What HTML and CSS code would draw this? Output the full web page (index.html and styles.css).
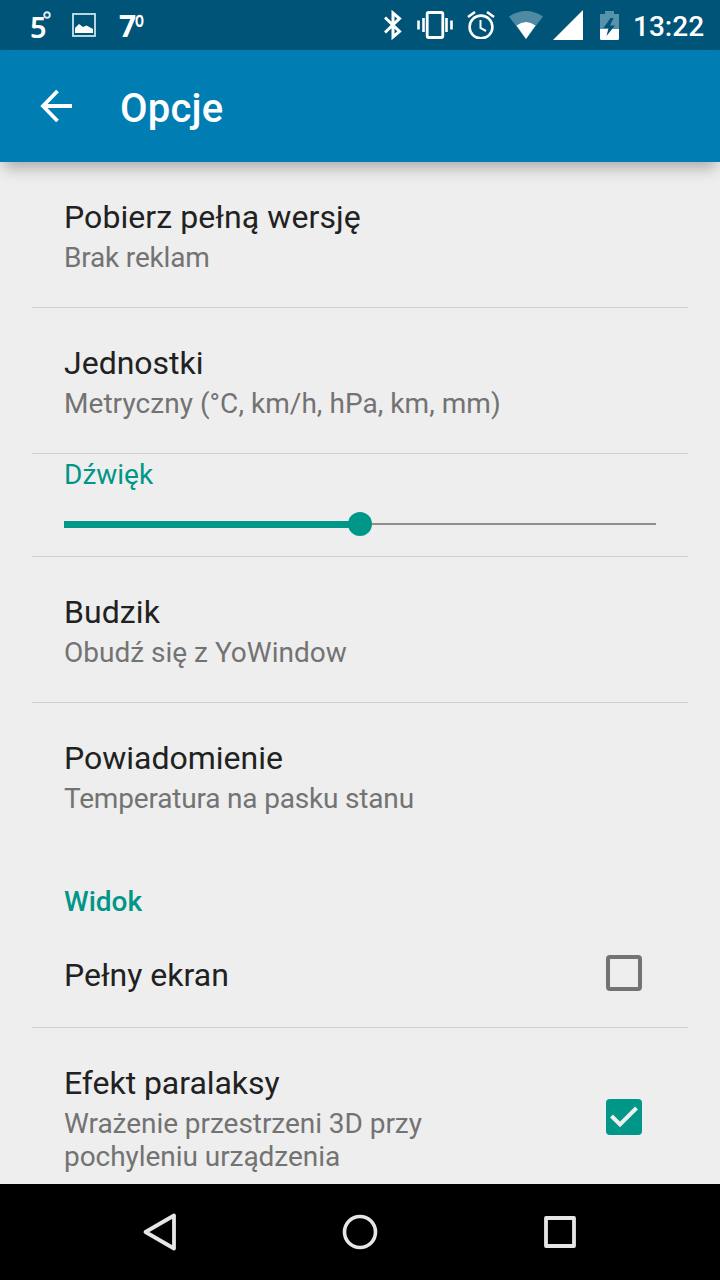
FILE: index.html
```html
<!DOCTYPE html>
<html lang="pl">
<head>
<meta charset="utf-8">
<title>Opcje</title>
<link rel="stylesheet" href="styles.css">
</head>
<body>
<div class="screen">
  <header class="status">
    <div class="notifications">
      <div class="temp-five">5<svg class="degree" viewBox="0 0 8 8"><circle cx="4" cy="4" r="2.8" fill="none" stroke="#d9edf2" stroke-width="1.9"/></svg></div>
      <svg class="picture" viewBox="0 0 24 24"><rect x="1" y="1" width="22" height="22" fill="none" stroke="#cbe6ec" stroke-width="1.8"/><path d="M3 20V15L7 11L11 14L14.500 12.500L21 16V20Z" fill="#fff"/></svg>
      <div class="temp-seven">7<span class="ordinal">º</span></div>
    </div>
    <div class="system">
      <svg class="bluetooth" viewBox="0 0 18 30"><path d="M1 7.500L15.500 21.500L9 27V3L15.500 8.500L1 22.500" fill="none" stroke="#fff" stroke-width="3"/></svg>
      <svg class="vibrate" viewBox="0 0 36 28"><rect x="10.200" y="1.500" width="15.600" height="25" rx="1.500" fill="none" stroke="#fff" stroke-width="2.800"/><path d="M6.500 7V21M29.500 7V21" stroke="#fff" stroke-width="2.600"/><path d="M1.500 9.500V18.500M34.500 9.500V18.500" stroke="#fff" stroke-width="2.600"/></svg>
      <svg class="alarm" viewBox="0 0 28 28"><circle cx="14" cy="16" r="11.400" fill="none" stroke="#fff" stroke-width="2.600"/><path d="M1 6L8 1M20 1L27 6" stroke="#fff" stroke-width="2.600"/><path d="M13.500 9V17L19 20" fill="none" stroke="#fff" stroke-width="2"/></svg>
      <svg class="wifi" viewBox="0 0 34 28"><path d="M0 5.500Q17-5.500 34 5.500L17 28Z" fill="#4e8ba3"/><path d="M7.500 14.500Q17 7.500 26.500 14.500L17 28Z" fill="#fff"/></svg>
      <svg class="signal" viewBox="0 0 30 30"><path d="M0 30L30 0V30Z" fill="#fff"/></svg>
      <svg class="battery" viewBox="0 0 19 29"><path d="M0 3H5V0H14V3H19V18H0Z" fill="#5892aa"/><path d="M0 18H19V27.500Q19 29 17.500 29H1.500Q0 29 0 27.500Z" fill="#fff"/><path d="M10.500 7L3.500 17H8.500L6.500 25L15 14.500H10L13.500 7Z" fill="#005478"/></svg>
      <time class="clock">13:22</time>
    </div>
  </header>
  <div class="appbar">
    <svg class="back" viewBox="0 0 34 34"><path d="M18.500 2L4 17L18.500 32M4 17H33" fill="none" stroke="#fff" stroke-width="3.800"/></svg>
    <h1 class="heading">Opcje</h1>
  </div>
  <main class="options">
    <section class="option">
      <h2 class="name wide">Pobierz pełną wersję</h2>
      <p class="summary tight">Brak reklam</p>
    </section>
    <section class="option">
      <h2 class="name">Jednostki</h2>
      <p class="summary wide-slight">Metryczny (°C, km/h, hPa, km, mm)</p>
    </section>
    <section class="option sound">
      <h2 class="label">Dźwięk</h2>
      <div class="slider"><span class="filled"></span><span class="thumb"></span><span class="rest"></span></div>
    </section>
    <section class="option">
      <h2 class="name wide">Budzik</h2>
      <p class="summary">Obudź się z YoWindow</p>
    </section>
    <section class="option last">
      <h2 class="name">Powiadomienie</h2>
      <p class="summary tight">Temperatura na pasku stanu</p>
    </section>
    <h2 class="category">Widok</h2>
    <section class="option toggle single">
      <h2 class="name">Pełny ekran</h2>
      <span class="checkbox"></span>
    </section>
    <section class="option toggle last">
      <div class="text">
        <h2 class="name snug">Efekt paralaksy</h2>
        <p class="summary snug">Wrażenie przestrzeni 3D przy<br>pochyleniu urządzenia</p>
      </div>
      <span class="checkbox checked"><svg class="check" viewBox="0 0 36 36"><path d="M5.500 17L14 25.500L30.500 9" fill="none" stroke="#eee" stroke-width="4"/></svg></span>
    </section>
  </main>
  <nav class="navbar">
    <svg class="nav-icon" viewBox="0 0 40 40"><path d="M5.500 20L34 3.500V36.500Z" fill="none" stroke="#e6e6e6" stroke-width="3.800" stroke-linejoin="round"/></svg>
    <svg class="nav-icon" viewBox="0 0 40 40"><circle cx="20" cy="20" r="15.500" fill="none" stroke="#e6e6e6" stroke-width="3.600"/></svg>
    <svg class="nav-icon" viewBox="0 0 40 40"><rect x="6" y="6" width="28" height="28" fill="none" stroke="#e6e6e6" stroke-width="3.800" stroke-linejoin="round"/></svg>
  </nav>
</div>
</body>
</html>
```
FILE: styles.css
```css
* {
  box-sizing: border-box;
}

body,
h1,
h2,
p {
  margin: 0;
}

svg {
  display: block;
  flex: none;
}

.screen {
  display: flex;
  flex-direction: column;
  width: 720px;
  height: 1280px;
  overflow: hidden;
  background: #eee;
  font-family: Roboto, "Noto Sans", sans-serif;
}

.status {
  display: flex;
  justify-content: space-between;
  height: 50px;
  padding: 0 16px 0 30px;
  background: #005478;
  color: #fff;
}

.notifications,
.system {
  display: flex;
  align-items: center;
}

.temp-five {
  display: flex;
  width: 42px;
  padding-top: 3px;
  font: 600 29px/28px "Noto Sans", sans-serif;
}

.degree {
  width: 8px;
  height: 8px;
  margin: -2px 0 0 -4px;
}

.picture {
  width: 24px;
  height: 24px;
}

.temp-seven {
  display: flex;
  margin-left: 23px;
  padding-top: 1px;
  font: 700 30px/30px "Open Sans", sans-serif;
  letter-spacing: -2px;
}

.ordinal {
  font-size: 30px;
  font-weight: 600;
  transform: scale(0.82, 1.2);
  transform-origin: 50% 20%;
}

.bluetooth {
  width: 18px;
  height: 30px;
}

.vibrate {
  width: 36px;
  height: 28px;
  margin-left: 15px;
}

.alarm {
  width: 28px;
  height: 28px;
  margin-left: 14px;
}

.wifi {
  width: 34px;
  height: 28px;
  margin-left: 14px;
}

.signal {
  width: 30px;
  height: 30px;
  margin-left: 10px;
}

.battery {
  width: 19px;
  height: 29px;
  margin-left: 17px;
}

.clock {
  width: 71px;
  margin-left: 14px;
  padding-top: 4px;
  font-size: 28px;
  font-weight: 500;
  line-height: 34px;
}

.appbar {
  display: flex;
  align-items: center;
  height: 112px;
  padding-left: 39px;
  background: #007eb3;
  box-shadow: 0 10px 14px -4px rgba(0, 0, 0, 0.28);
  color: #fff;
}

.back {
  width: 34px;
  height: 34px;
}

.heading {
  margin-left: 47px;
  padding-top: 6px;
  font-size: 40px;
  font-weight: 500;
  line-height: 48px;
  letter-spacing: 0.2px;
}

.options {
  flex: 1;
  padding: 0 32px;
}

.option {
  height: 146px;
  padding: 36px 32px 0;
  border-bottom: 1px solid #cfcfcf;
}

.option.last {
  border-bottom: 0;
}

.name {
  color: #212121;
  font-size: 32px;
  font-weight: 400;
  line-height: 38px;
}

.summary {
  padding-top: 5px;
  color: #737373;
  font-size: 28px;
  line-height: 33px;
}

.wide {
  letter-spacing: 0.08px;
}

.wide-slight {
  letter-spacing: 0.05px;
}

.tight {
  letter-spacing: -0.18px;
}

.snug {
  letter-spacing: -0.05px;
}

.option.sound {
  height: 103px;
  padding-top: 4px;
}

.label {
  color: #009688;
  font-size: 28px;
  font-weight: 400;
  line-height: 33px;
}

.slider {
  display: flex;
  align-items: center;
  height: 24px;
  margin-top: 21px;
}

.filled {
  width: 286px;
  height: 7px;
  background: #009688;
}

.thumb {
  width: 24px;
  height: 24px;
  margin-left: -2px;
  border-radius: 50%;
  background: #009688;
}

.rest {
  flex: 1;
  height: 2px;
  background: #8e8e8e;
}

.category {
  height: 74px;
  padding: 36px 32px 0;
  color: #009688;
  font-size: 28px;
  font-weight: 500;
  line-height: 33px;
}

.option.toggle {
  display: flex;
  justify-content: space-between;
  padding-right: 46px;
}

.option.single {
  height: 105px;
  padding-top: 33px;
}

.checkbox {
  flex: none;
  width: 36px;
  height: 36px;
  margin-top: -1px;
  border: 4px solid #737373;
  border-radius: 4px;
}

.checkbox.checked {
  margin-top: 35px;
  border: 0;
  background: #009688;
}

.check {
  width: 36px;
  height: 36px;
}

.navbar {
  display: flex;
  align-items: center;
  justify-content: space-between;
  height: 96px;
  padding: 0 140px;
  background: #000;
}

.nav-icon {
  width: 40px;
  height: 40px;
}
```
